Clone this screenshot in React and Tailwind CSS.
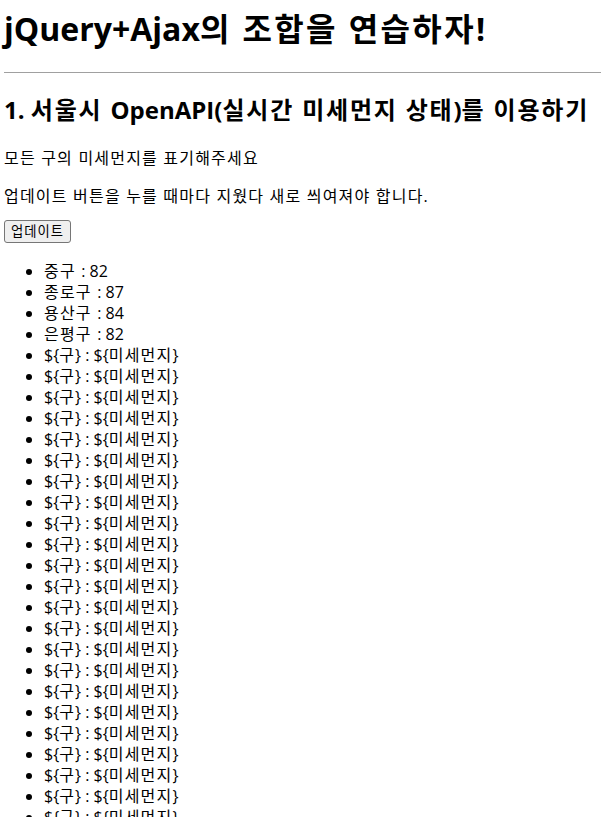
const districts = [
  { name: "중구", value: 82 },
  { name: "종로구", value: 87 },
  { name: "용산구", value: 84 },
  { name: "은평구", value: 82 },
];

const placeholders = Array.from({ length: 24 });

// Hangul runs get a little extra tracking so they come out as wide as Malgun Gothic
function Ko({ text }) {
  const parts = text.split(/([가-힣][가-힣 ]*)/);
  return parts.map((part, i) =>
    /[가-힣]/.test(part) ? (
      <span key={i} className="tracking-[0.075em]">
        {part}
      </span>
    ) : (
      part
    )
  );
}

export default function App() {
  return (
    <div
      className="px-[4px] pb-4 text-black bg-white"
      style={{ fontFamily: '"Open Sans", "Noto Sans CJK KR", sans-serif' }}
    >
      <h1 className="mt-[8px] text-[32px] leading-[42px] font-bold">
        <Ko text="jQuery+Ajax의 조합을 연습하자!" />
      </h1>

      <hr className="mt-[22px] border-0 border-t border-[#a0a0a0]" />

      <h2 className="mt-[21px] text-[24px] leading-[32px] font-bold">
        <Ko text="1. 서울시 OpenAPI(실시간 미세먼지 상태)를 이용하기" />
      </h2>

      <p className="mt-[22px] text-[16px] leading-[21px]">
        <Ko text="모든 구의 미세먼지를 표기해주세요" />
      </p>
      <p className="mt-[17px] text-[16px] leading-[21px]">
        <Ko text="업데이트 버튼을 누를 때마다 지웠다 새로 씌여져야 합니다." />
      </p>

      <button className="mt-[13px] h-[23px] px-[6px] text-[13.33px] leading-[19px] bg-[#efefef] border border-[#767676] rounded-[3px]">
        <Ko text="업데이트" />
      </button>

      <ul className="mt-[18px] pl-[40px] list-disc text-[16px] leading-[21px]">
        {districts.map((d) => (
          <li key={d.name}>
            <Ko text={`${d.name} : ${d.value}`} />
          </li>
        ))}
        {placeholders.map((_, i) => (
          <li key={i}>
            <Ko text={"${구} : ${미세먼지}"} />
          </li>
        ))}
      </ul>
    </div>
  );
}
